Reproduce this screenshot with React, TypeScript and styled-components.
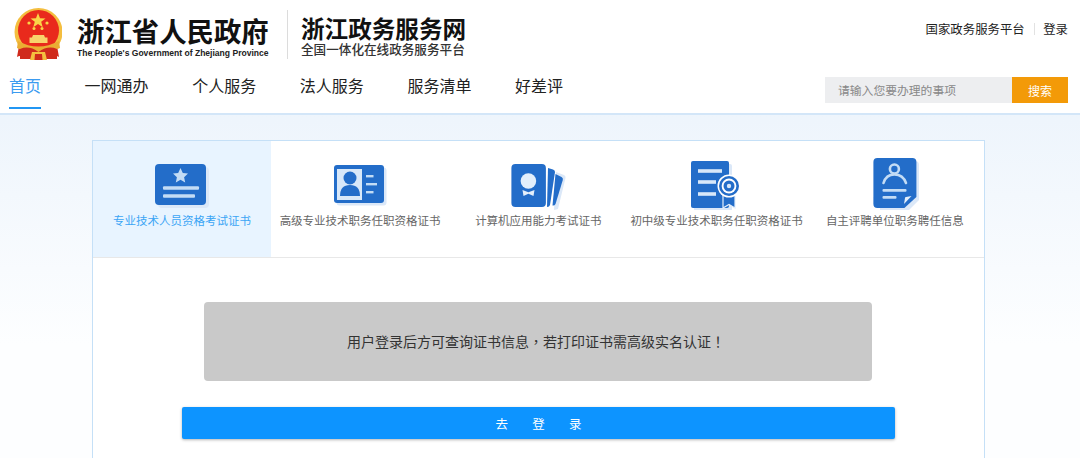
import React from "react";
import styled, { createGlobalStyle } from "styled-components";

const Global = createGlobalStyle`
  html, body { margin: 0; padding: 0; }
  body {
    width: 1080px; height: 458px; overflow: hidden;
    font-family: "Liberation Sans", "Noto Sans CJK SC", sans-serif;
    background: #fff;
  }
`;
const Page = styled.div`
  height: 458px; overflow: hidden;
  background: linear-gradient(#e9f2fb 0, #eef5fc 120px, #fdfeff 344px);
`;
const Header = styled.header`
  height: 105px; background: #fff; padding: 8px 12px 0 9px;
  border-bottom: 2px solid #d3e6f8;
`;
const TopRow = styled.div`display: flex; justify-content: space-between; height: 60px;`;
const Brand = styled.div`display: flex; align-items: flex-start; padding-left: 5px;`;
const GovBlock = styled.div`margin-left: 15px; display: flex; flex-direction: column; width: 192px;`;
const GovTitle = styled.div`
  font-family: "Noto Sans CJK SC", sans-serif; font-weight: 700; font-size: 27.4px; line-height: 36px;
  margin-top: 4px; color: #111; white-space: nowrap;
`;
const GovEnglish = styled.div`
  font-weight: 700; font-size: 8.55px; line-height: 11px; color: #222; white-space: nowrap;
`;
const BrandDivider = styled.div`width: 1px; height: 49px; margin: 2px 13px 0 18px; background: #dcdcdc;`;
const PortalBlock = styled.div`display: flex; flex-direction: column; white-space: nowrap;`;
const PortalTitle = styled.div`
  font-family: "Noto Sans CJK SC", sans-serif; font-weight: 700; font-size: 23.6px; line-height: 26px; margin-top: 7px; color: #111;
`;
const PortalSub = styled.div`
  font-family: "Noto Sans CJK SC", sans-serif; font-weight: 500; font-size: 12.6px; line-height: 14px; margin-top: 1px; color: #333;
`;
const TopLinks = styled.div`
  display: flex; align-items: center; height: 14px; margin-top: 14px;
  font-family: "Noto Sans CJK SC", sans-serif; font-size: 12.4px; color: #222;
`;
const LinkDivider = styled.span`width: 1px; height: 12px; background: #e2e2e2; margin: 0 8.5px 0 9px;`;
const NavRow = styled.div`display: flex; justify-content: space-between; align-items: flex-start; height: 45px;`;
const Nav = styled.nav`display: flex; gap: 43.6px; font-family: "Noto Sans CJK SC", sans-serif; font-size: 16px;`;
const NavItem = styled.a<{ $active?: boolean }>`
  display: block; height: 41px; line-height: 34px; box-sizing: border-box; white-space: nowrap;
  color: ${p => (p.$active ? "#3b9bf0" : "#222")};
  border-bottom: 2px solid ${p => (p.$active ? "#2196f3" : "transparent")};
`;
const Search = styled.div`display: flex; width: 243px; height: 26px; margin-top: 9px;`;
const SearchField = styled.div`
  flex: 1; background: #edeef0; color: #888; font-family: "Noto Sans CJK SC", sans-serif;
  font-size: 11.8px; line-height: 26px; padding-left: 13px;
`;
const SearchButton = styled.button`
  width: 56px; border: 0; padding: 0; background: #f39a08; color: #fff;
  font-family: "Noto Sans CJK SC", sans-serif; font-size: 12px;
`;
const Main = styled.main`padding: 25px 95px 0 92px;`;
const Card = styled.section`
  border: 1px solid #c5e0f7; background: #fff; height: 340px; box-sizing: border-box;
`;
const Tabs = styled.div`
  display: grid; grid-template-columns: 178px repeat(4, 1fr); height: 117px; box-sizing: border-box;
  border-bottom: 1px solid #e8e8e8;
`;
const Tab = styled.div<{ $active?: boolean }>`
  display: flex; flex-direction: column; align-items: center; padding-top: 17px; box-sizing: border-box;
  background: ${p => (p.$active ? "#e8f4ff" : "#fff")};
  color: ${p => (p.$active ? "#3ba5f5" : "#666")};
`;
const TabIcon = styled.svg`display: block; width: 60px; height: 52px; flex: none;`;
const TabLabel = styled.div`
  margin-top: 2px; font-family: "Noto Sans CJK SC", sans-serif; font-size: 11.5px; line-height: 16px; white-space: nowrap;
`;
const Body = styled.div`display: flex; flex-direction: column; padding: 44px 89px 0;`;
const Notice = styled.div`
  margin: 0 23px 0 22px; height: 79px; padding: 0 4px 2px 0; box-sizing: border-box;
  background: #c9c9c9; border-radius: 4px; color: #333;
  display: flex; align-items: center; justify-content: center;
  font-family: "Noto Sans CJK SC", sans-serif; font-size: 14px; white-space: pre;
`;
const Punct = styled.span`font-family: "Noto Sans CJK TC", sans-serif;`;
const LoginButton = styled.button`
  margin-top: 26px; height: 32px; border: 0; border-radius: 2px; background: #0d94ff; color: #fff;
  box-shadow: 0 1px 3px rgba(0,0,0,.3);
  font-family: "Noto Sans CJK SC", sans-serif; font-size: 12.5px; word-spacing: 21.5px; padding: 0;
`;

const B = "#236dc9", L = "#c3dcf5", S = "#dbe8f8";

const Emblem = () => (
  <svg width="48" height="52" viewBox="0 0 48 52" style={{ display: "block", flex: "none" }}>
    <path d="M5 38 L3 49 Q7 46 10 51 L38 51 Q41 46 45 49 L43 38 Z" fill="#d02a1c" />
    <circle cx="24.500" cy="24" r="24" fill="#f4be3f" />
    <circle cx="24.500" cy="22.500" r="20.500" fill="#e92a1c" />
    <polygon points="24,5 26,10.200 31.500,10.400 27.200,13.800 28.700,19.200 24,16.100 19.300,19.200 20.800,13.800 16.500,10.400 22,10.200" fill="#f9d548" />
    <circle cx="15" cy="15" r="1.600" fill="#f9d548" />
    <circle cx="33" cy="15" r="1.600" fill="#f9d548" />
    <circle cx="20" cy="20.500" r="1.500" fill="#f9d548" />
    <circle cx="28" cy="20.500" r="1.500" fill="#f9d548" />
    <path d="M19 27 L30 27 L31 29.500 L33.500 29.500 L33.500 35 L15.500 35 L15.500 29.500 L18 29.500 Z" fill="#f8d36c" />
    <path d="M4 33 Q24 44 45 33 L46 40 Q24 50 3 40 Z" fill="#eaae33" />
    <path d="M6 41 Q15 37 24.500 44 Q34 37 43 41 L43 51 L6 51 Z" fill="#d02a1c" />
    <path d="M18 44 L31 44 L33 52 L16 52 Z" fill="#f4be3f" />
    <path d="M21 46 L28 46 L28.500 52 L20.500 52 Z" fill="#d02a1c" />
  </svg>
);

const CertIcon = () => (
  <TabIcon viewBox="0 0 60 52">
    <rect x="6" y="9" width="51" height="41" rx="4" fill={S} />
    <rect x="3" y="6" width="51" height="41" rx="4" fill={B} />
    <polygon points="28.500,10 30.800,15 36,15.600 32.100,19.200 33.200,24.500 28.500,21.800 23.800,24.500 24.900,19.200 21,15.600 26.200,15" fill={L} />
    <rect x="11" y="28.200" width="36" height="3.600" rx="1" fill={L} />
    <rect x="11" y="36.200" width="32" height="3.600" rx="1" fill={L} />
  </TabIcon>
);
const IdIcon = () => (
  <TabIcon viewBox="0 0 60 52">
    <rect x="6.500" y="9.500" width="50" height="38" rx="3" fill={S} />
    <rect x="4" y="7" width="50" height="38" rx="3" fill={B} />
    <rect x="7" y="11" width="25" height="31" fill="#d8e8f9" />
    <circle cx="20" cy="20" r="6.500" fill={B} />
    <path d="M10 38 Q10 27 20 27 Q30 27 30 38 Z" fill={B} />
    <rect x="36" y="17" width="7.500" height="2.400" fill={L} />
    <rect x="36" y="25" width="11" height="2.400" fill={L} />
    <rect x="36" y="33" width="7.500" height="2.400" fill={L} />
  </TabIcon>
);
const CardsIcon = () => (
  <TabIcon viewBox="0 0 60 52">
    <path d="M42 13 L50 16 Q52 17 51.500 19 L44 50 L40 51 Z" fill={S} transform="translate(6 1)" />
    <path d="M47.500 16 L53.500 19 Q55.400 20 54.800 22 L47.500 46 Q46.500 48 44.500 47.500 Z" fill={B} />
    <path d="M40 10 L45 11.500 Q47 12.200 47 14 L42 47 Q41.500 49 39 49 Z" fill={B} />
    <rect x="3.400" y="6" width="34.500" height="43" rx="4" fill={B} />
    <circle cx="20.400" cy="23" r="7.800" fill="#e3effb" />
    <path d="M14.500 32 L20.400 34.200 L26.500 32 L25.500 38 L20.400 35.800 L15.500 38 Z" fill="#e3effb" />
  </TabIcon>
);
const SealIcon = () => (
  <TabIcon viewBox="0 0 60 52">
    <rect x="7" y="6" width="38" height="47" rx="2" fill={S} />
    <rect x="4" y="3" width="38" height="47" rx="2" fill={B} />
    <rect x="11" y="11.200" width="24" height="3.600" fill="#d8e8f9" />
    <rect x="11" y="22.200" width="18" height="3.600" fill="#d8e8f9" />
    <rect x="11" y="34.200" width="18" height="3.600" fill="#d8e8f9" />
    <path d="M36 34 L36 50 L42 46.500 L48 50 L48 34 Z" fill={B} stroke="#e3effb" strokeWidth="1.200" />
    <circle cx="42" cy="28" r="11.500" fill="#fff" />
    <circle cx="42" cy="28" r="10" fill={B} />
    <circle cx="42" cy="28" r="7.400" fill="#fff" />
    <circle cx="42" cy="28" r="5.500" fill={B} />
    <circle cx="42" cy="28" r="2.200" fill="#d8e8f9" />
  </TabIcon>
);
const PersonIcon = () => (
  <TabIcon viewBox="0 0 60 52">
    <path d="M15 3 L50 3 Q54 3 54 7 L54 42 L43 53 L15 53 Z" fill={S} />
    <path d="M12.400 0 L47.400 0 Q51.400 0 51.400 4 L51.400 39 L39.400 50 L12.400 50 Q8.400 50 8.400 46 L8.400 4 Q8.400 0 12.400 0 Z" fill={B} />
    <circle cx="29.400" cy="11" r="4.500" fill="none" stroke={L} strokeWidth="2.600" />
    <path d="M18.500 25 Q21 16.500 29.400 16.500 Q38 16.500 41 25" fill="none" stroke={L} strokeWidth="2.600" strokeLinecap="round" />
    <rect x="17.500" y="31" width="24" height="2.800" rx="1" fill={L} />
    <rect x="17.500" y="38" width="14" height="2.800" rx="1" fill={L} />
    <path d="M39 46 L40 40 Q40 39 41 39 L46.500 38 Z" fill="#e3effb" />
  </TabIcon>
);

const tabs = [
  { label: "专业技术人员资格考试证书", icon: <CertIcon />, active: true },
  { label: "高级专业技术职务任职资格证书", icon: <IdIcon /> },
  { label: "计算机应用能力考试证书", icon: <CardsIcon /> },
  { label: "初中级专业技术职务任职资格证书", icon: <SealIcon /> },
  { label: "自主评聘单位职务聘任信息", icon: <PersonIcon /> },
];
const navItems = ["首页", "一网通办", "个人服务", "法人服务", "服务清单", "好差评"];

export default function App() {
  return (
    <Page>
      <Global />
      <Header>
        <TopRow>
          <Brand>
            <Emblem />
            <GovBlock>
              <GovTitle>浙江省人民政府</GovTitle>
              <GovEnglish>The People's Government of Zhejiang Province</GovEnglish>
            </GovBlock>
            <BrandDivider />
            <PortalBlock>
              <PortalTitle>浙江政务服务网</PortalTitle>
              <PortalSub>全国一体化在线政务服务平台</PortalSub>
            </PortalBlock>
          </Brand>
          <TopLinks>
            <span>国家政务服务平台</span>
            <LinkDivider />
            <span>登录</span>
          </TopLinks>
        </TopRow>
        <NavRow>
          <Nav>
            {navItems.map((n, i) => (
              <NavItem key={n} $active={i === 0}>{n}</NavItem>
            ))}
          </Nav>
          <Search>
            <SearchField>请输入您要办理的事项</SearchField>
            <SearchButton>搜索</SearchButton>
          </Search>
        </NavRow>
      </Header>
      <Main>
        <Card>
          <Tabs>
            {tabs.map(t => (
              <Tab key={t.label} $active={t.active}>
                {t.icon}
                <TabLabel>{t.label}</TabLabel>
              </Tab>
            ))}
          </Tabs>
          <Body>
            <Notice>
              <span>用户登录后方可查询证书信息<Punct>，</Punct>若打印证书需高级实名认证<Punct>！</Punct></span>
            </Notice>
            <LoginButton>去 登 录</LoginButton>
          </Body>
        </Card>
      </Main>
    </Page>
  );
}
